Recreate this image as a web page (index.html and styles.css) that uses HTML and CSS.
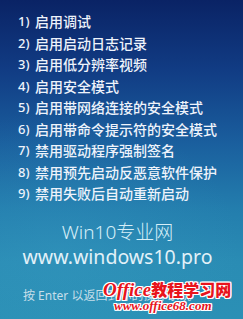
FILE: index.html
```html
<!DOCTYPE html>
<html lang="zh-CN">
<head>
<meta charset="utf-8">
<link rel="stylesheet" href="styles.css">
</head>
<body>
<div class="screen">
  <ol class="menu">
    <li><span class="num">1)</span>启用调试</li>
    <li><span class="num">2)</span>启用启动日志记录</li>
    <li><span class="num">3)</span>启用低分辨率视频</li>
    <li><span class="num">4)</span>启用安全模式</li>
    <li><span class="num">5)</span>启用带网络连接的安全模式</li>
    <li><span class="num">6)</span>启用带命令提示符的安全模式</li>
    <li><span class="num">7)</span>禁用驱动程序强制签名</li>
    <li><span class="num">8)</span>禁用预先启动反恶意软件保护</li>
    <li><span class="num">9)</span>禁用失败后自动重新启动</li>
  </ol>
  <div class="brand">
    <div class="brand-name">Win10专业网</div>
    <div class="brand-url">www.windows10.pro</div>
  </div>
  <div class="footer">按 Enter 以返回到你的操作系统</div>
  <div class="watermark">
    <div class="wm-title"><span class="wm-office">Office</span>教程学习网</div>
    <div class="wm-url">www.office68.com</div>
  </div>
</div>
</body>
</html>
```
FILE: styles.css
```css
html, body {
  margin: 0;
  padding: 0;
}
body {
  width: 243px;
  height: 319px;
  overflow: hidden;
}
.screen {
  position: relative;
  width: 243px;
  height: 319px;
  box-sizing: border-box;
  padding: 11px 0 0 18px;
  background:
    radial-gradient(ellipse 180px 140px at 60px 250px, rgba(60,160,200,0.25), rgba(60,160,200,0) 100%),
    linear-gradient(180deg, #0a2365 0%, #113c84 22%, #1a5f9e 45%, #237dad 65%, #2a8cb4 82%, #2b90b5 100%);
  font-family: "Noto Sans", "Noto Sans CJK SC", sans-serif;
  color: #eef3fb;
  display: flex;
  flex-direction: column;
}
.menu {
  list-style: none;
  margin: 0;
  padding: 0;
  font-size: 14px;
  line-height: 21.5px;
  font-weight: 500;
}
.menu li {
  display: flex;
  white-space: nowrap;
}
.num {
  width: 17px;
  font-size: 13px;
}
.brand {
  margin-top: 15px;
  margin-left: -18px;
  text-align: center;
  padding-right: 8px;
}
.brand-name {
  font-size: 19px;
  line-height: 24px;
  font-weight: 300;
  color: #d6eef7;
}
.brand-url {
  font-size: 19.5px;
  line-height: 24px;
  margin-top: 1px;
  color: #e2f1f8;
}
.footer {
  margin-top: 19px;
  margin-left: 5px;
  font-size: 12px;
  line-height: 16px;
  color: #c6dfea;
  white-space: nowrap;
}
.watermark {
  position: absolute;
  left: 103px;
  top: 280px;
  color: #e8141c;
  font-weight: bold;
  text-shadow:
    1px 0 0 #fff, -1px 0 0 #fff, 0 1px 0 #fff, 0 -1px 0 #fff,
    1px 1px 0 #fff, -1px -1px 0 #fff, 1px -1px 0 #fff, -1px 1px 0 #fff;
  white-space: nowrap;
}
.wm-title {
  font-size: 16px;
  line-height: 19px;
  font-family: "Noto Sans CJK SC", sans-serif;
  font-weight: 900;
}
.wm-office {
  font-family: "Liberation Serif", serif;
  font-style: italic;
  font-size: 19px;
}
.wm-url {
  margin-left: 11px;
  font-family: "Liberation Serif", serif;
  font-style: italic;
  font-size: 13px;
  line-height: 14px;
}
```
